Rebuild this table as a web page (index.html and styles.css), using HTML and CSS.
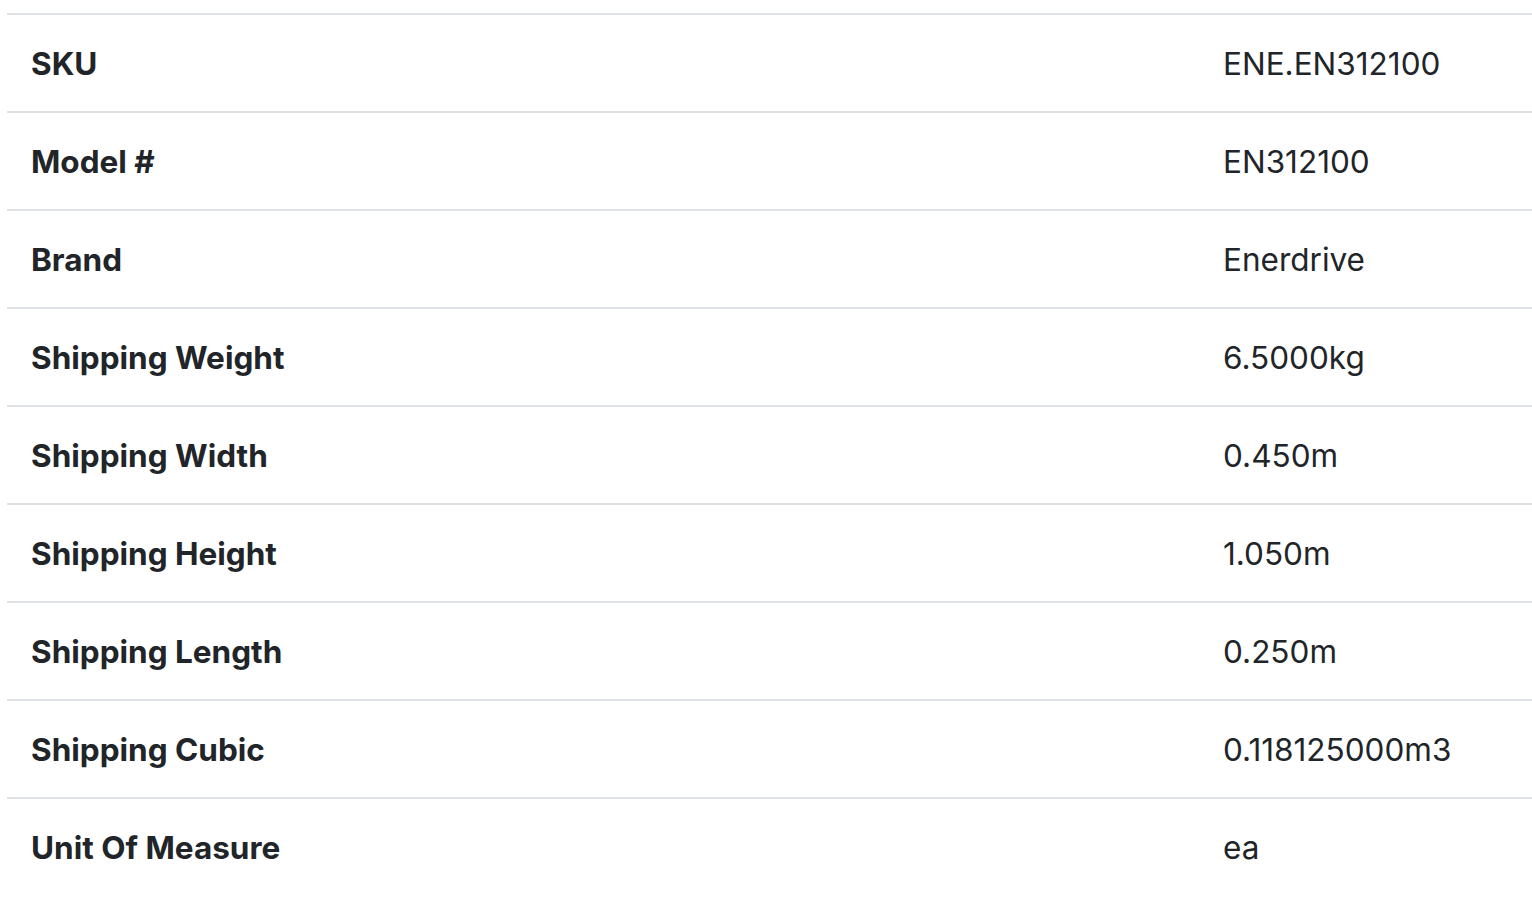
FILE: index.html
```html
<!DOCTYPE html>
<html>
<head>
<meta charset="utf-8">
<link rel="stylesheet" href="styles.css">
</head>
<body>
<table class="specs">
  <tbody>
    <tr><th>SKU</th><td>ENE.EN312100</td></tr>
    <tr><th>Model #</th><td>EN312100</td></tr>
    <tr><th>Brand</th><td>Enerdrive</td></tr>
    <tr><th>Shipping Weight</th><td>6.5000kg</td></tr>
    <tr><th>Shipping Width</th><td>0.450m</td></tr>
    <tr><th>Shipping Height</th><td>1.050m</td></tr>
    <tr><th>Shipping Length</th><td>0.250m</td></tr>
    <tr><th>Shipping Cubic</th><td>0.118125000m3</td></tr>
    <tr><th>Unit Of Measure</th><td>ea</td></tr>
  </tbody>
</table>
</body>
</html>
```
FILE: styles.css
```css
html, body {
  margin: 0;
  padding: 0;
  background: #fff;
}
body {
  padding: 13px 0 0 7px;
  font-family: Inter, "Noto Sans", sans-serif;
  color: #212529;
}
.specs {
  border-collapse: collapse;
  width: 1525px;
  font-size: 31.5px;
  line-height: 48px;
}
.specs th,
.specs td {
  border-top: 2px solid #dee2e6;
  padding: 25px 24px 23px;
  text-align: left;
  vertical-align: top;
}
.specs th {
  font-weight: 700;
  width: 1144px;
}
.specs td {
  font-weight: 400;
}
```
